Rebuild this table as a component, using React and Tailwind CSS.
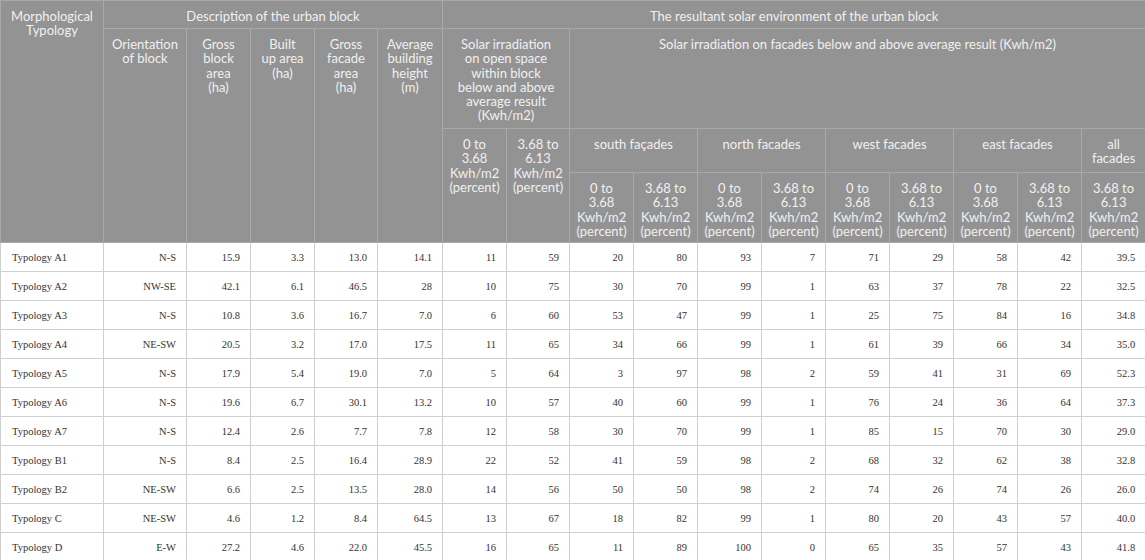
import React from "react";

const rows = [
  ["Typology A1", "N-S", "15.9", "3.3", "13.0", "14.1", "11", "59", "20", "80", "93", "7", "71", "29", "58", "42", "39.5"],
  ["Typology A2", "NW-SE", "42.1", "6.1", "46.5", "28", "10", "75", "30", "70", "99", "1", "63", "37", "78", "22", "32.5"],
  ["Typology A3", "N-S", "10.8", "3.6", "16.7", "7.0", "6", "60", "53", "47", "99", "1", "25", "75", "84", "16", "34.8"],
  ["Typology A4", "NE-SW", "20.5", "3.2", "17.0", "17.5", "11", "65", "34", "66", "99", "1", "61", "39", "66", "34", "35.0"],
  ["Typology A5", "N-S", "17.9", "5.4", "19.0", "7.0", "5", "64", "3", "97", "98", "2", "59", "41", "31", "69", "52.3"],
  ["Typology A6", "N-S", "19.6", "6.7", "30.1", "13.2", "10", "57", "40", "60", "99", "1", "76", "24", "36", "64", "37.3"],
  ["Typology A7", "N-S", "12.4", "2.6", "7.7", "7.8", "12", "58", "30", "70", "99", "1", "85", "15", "70", "30", "29.0"],
  ["Typology B1", "N-S", "8.4", "2.5", "16.4", "28.9", "22", "52", "41", "59", "98", "2", "68", "32", "62", "38", "32.8"],
  ["Typology B2", "NE-SW", "6.6", "2.5", "13.5", "28.0", "14", "56", "50", "50", "98", "2", "74", "26", "74", "26", "26.0"],
  ["Typology C", "NE-SW", "4.6", "1.2", "8.4", "64.5", "13", "67", "18", "82", "99", "1", "80", "20", "43", "57", "40.0"],
  ["Typology D", "E-W", "27.2", "4.6", "22.0", "45.5", "16", "65", "11", "89", "100", "0", "65", "35", "57", "43", "41.8"],
];

const widths = [103, 83, 64, 64, 63, 65, 64, 63, 64, 64, 64, 64, 64, 64, 64, 64, 64];

const th =
  "border border-[#a9a9a9] bg-[#939393] text-[#f0f0f0] font-normal text-center align-top px-[2px] pt-[8px] pb-0";

function Low() {
  return (
    <>
      0 to
      <br />
      3.68
      <br />
      Kwh/m2
      <br />
      (percent)
    </>
  );
}
function High() {
  return (
    <>
      3.68 to
      <br />
      6.13
      <br />
      Kwh/m2
      <br />
      (percent)
    </>
  );
}

export default function App() {
  return (
    <div className="w-[1145px] h-[560px] overflow-hidden bg-white">
      <table
        className="table-fixed border-collapse w-[1145px]"
        style={{ fontFamily: "Lato, 'Open Sans', sans-serif" }}
      >
        <colgroup>
          {widths.map((w, i) => (
            <col key={i} style={{ width: w }} />
          ))}
        </colgroup>
        <thead className="text-[13px] leading-[14.3px]">
          <tr className="h-[28px]">
            <th rowSpan={4} className={th}>
              Morphological
              <br />
              Typology
            </th>
            <th colSpan={5} className={th}>
              Description of the urban block
            </th>
            <th colSpan={11} className={th}>
              The resultant solar environment of the urban block
            </th>
          </tr>
          <tr className="h-[100px]">
            <th rowSpan={3} className={th}>
              Orientation
              <br />
              of block
            </th>
            <th rowSpan={3} className={th}>
              Gross
              <br />
              block
              <br />
              area
              <br />
              (ha)
            </th>
            <th rowSpan={3} className={th}>
              Built
              <br />
              up area
              <br />
              (ha)
            </th>
            <th rowSpan={3} className={th}>
              Gross
              <br />
              facade
              <br />
              area
              <br />
              (ha)
            </th>
            <th rowSpan={3} className={th}>
              Average
              <br />
              building
              <br />
              height
              <br />
              (m)
            </th>
            <th colSpan={2} className={th}>
              Solar irradiation
              <br />
              on open space
              <br />
              within block
              <br />
              below and above
              <br />
              average result
              <br />
              (Kwh/m2)
            </th>
            <th colSpan={9} className={th}>
              Solar irradiation on facades below and above average result (Kwh/m2)
            </th>
          </tr>
          <tr className="h-[44px]">
            <th rowSpan={2} className={th}>
              <Low />
            </th>
            <th rowSpan={2} className={th}>
              <High />
            </th>
            <th colSpan={2} className={th}>
              south façades
            </th>
            <th colSpan={2} className={th}>
              north facades
            </th>
            <th colSpan={2} className={th}>
              west facades
            </th>
            <th colSpan={2} className={th}>
              east facades
            </th>
            <th className={th}>
              all
              <br />
              facades
            </th>
          </tr>
          <tr className="h-[70px]">
            {[0, 1, 2, 3].map((i) => (
              <React.Fragment key={i}>
                <th className={th}>
                  <Low />
                </th>
                <th className={th}>
                  <High />
                </th>
              </React.Fragment>
            ))}
            <th className={th}>
              <High />
            </th>
          </tr>
        </thead>
        <tbody
          className="text-[10.5px] text-[#333333]"
          style={{ fontFamily: "'Liberation Serif', serif" }}
        >
          {rows.map((r, i) => (
            <tr key={i} className="h-[29px]">
              {r.map((c, j) => (
                <td
                  key={j}
                  className={
                    "border border-[#cfcfcf] align-middle pt-[2px] pb-0 " +
                    (j === 0 ? "text-left pl-[11px]" : "text-right pr-[10px]")
                  }
                >
                  {c}
                </td>
              ))}
            </tr>
          ))}
        </tbody>
      </table>
    </div>
  );
}
